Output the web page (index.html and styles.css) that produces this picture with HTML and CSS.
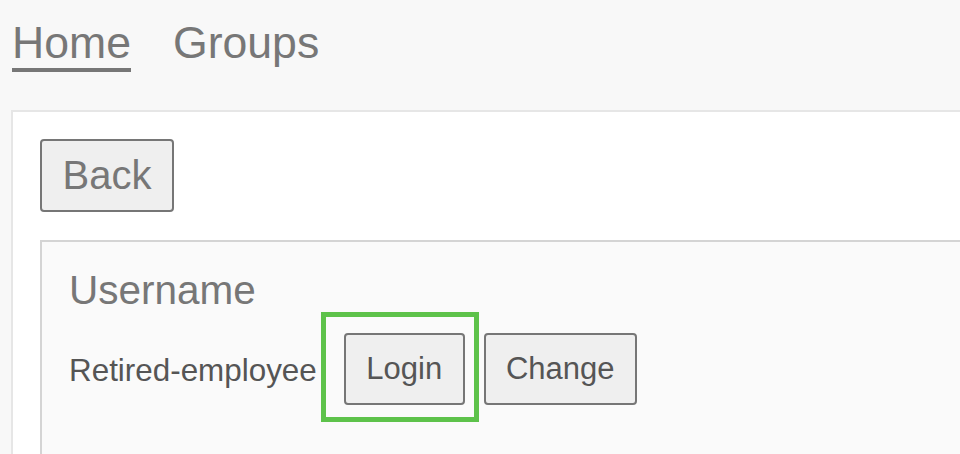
FILE: index.html
```html
<!DOCTYPE html>
<html lang="en">
<head>
  <meta charset="UTF-8">
  <meta name="viewport" content="width=device-width, initial-scale=1.0">
  <title>Account</title>
  <link rel="stylesheet" href="styles.css">
</head>
<body>
  <!-- Top navigation -->
  <nav class="nav">
    <a href="#" class="nav-link active">Home</a>
    <a href="#" class="nav-link">Groups</a>
  </nav>

  <!-- Main panel -->
  <main class="panel">
    <button class="btn btn-back">Back</button>

    <section class="card">
      <h2 class="card-title">Username</h2>
      <div class="user-row">
        <span class="user-name">Retired-employee</span>
        <span class="highlight-wrap">
          <button class="btn btn-small">Login</button>
          <span class="highlight"></span>
        </span>
        <button class="btn btn-small btn-change">Change</button>
      </div>
    </section>
  </main>
</body>
</html>
```

FILE: styles.css
```css
/* General reset */
* {
  margin: 0;
  padding: 0;
  box-sizing: border-box;
}

body {
  font-family: 'Liberation Sans', Arial, sans-serif;
  background-color: #f8f8f8;
  color: #777;
  height: 100vh;
  overflow: hidden;
  display: flex;
  flex-direction: column;
}

/* Navigation */
.nav {
  display: flex;
  gap: 42px;
  padding: 17px 0 0 12px;
  height: 110px;
  flex-shrink: 0;
}

.nav-link {
  font-size: 44.6px;
  line-height: 51px;
  height: 55px;
  color: #777;
  text-decoration: none;
}

.nav-link.active {
  border-bottom: 4px solid #777;
}

/* Panel */
.panel {
  flex: 1;
  display: flex;
  flex-direction: column;
  margin-left: 11px;
  background: #fff;
  border: 2px solid #e6e6e6;
  border-right: none;
  border-bottom: none;
  padding: 27px 0 0 27px;
}

/* Buttons */
.btn {
  font-family: 'Liberation Sans', Arial, sans-serif;
  background-color: #efefef;
  color: #777;
  border: 2px solid #767676;
  border-radius: 4px;
  cursor: pointer;
}

.btn-back {
  align-self: flex-start;
  font-size: 40px;
  line-height: 46px;
  padding: 11px 20px 12px;
  width: 134px;
}

.btn-small {
  font-size: 31px;
  line-height: 36px;
  padding: 16px 0 16px;
  width: 121px;
  color: #555;
}

.btn-change {
  width: 153px;
  margin-left: 19px;
}

/* Card */
.card {
  flex: 1;
  margin-top: 28px;
  background: #fafafa;
  border: 2px solid #d4d4d4;
  border-right: none;
  border-bottom: none;
  padding: 25px 0 0 27px;
}

.card-title {
  font-size: 40.5px;
  font-weight: normal;
  line-height: 46px;
  color: #777;
}

.user-row {
  display: flex;
  align-items: center;
  margin-top: 20px;
}

.user-name {
  font-size: 31.4px;
  color: #555;
  padding-top: 3px;
}

.highlight-wrap {
  position: relative;
  margin-left: 27px;
  display: flex;
}

/* Green focus highlight drawn over the Login button */
.highlight {
  position: absolute;
  left: -23px;
  top: -21px;
  width: 158px;
  height: 110px;
  border: 5px solid #5dc24a;
  pointer-events: none;
}
```
